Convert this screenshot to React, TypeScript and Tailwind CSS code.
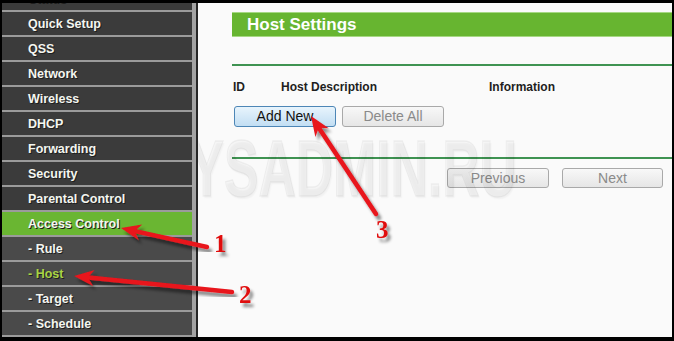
import React from "react";

type Item = { label: string; sub?: boolean; active?: boolean; current?: boolean };

const items: Item[] = [
  { label: "Status" },
  { label: "Quick Setup" },
  { label: "QSS" },
  { label: "Network" },
  { label: "Wireless" },
  { label: "DHCP" },
  { label: "Forwarding" },
  { label: "Security" },
  { label: "Parental Control" },
  { label: "Access Control", active: true },
  { label: "- Rule", sub: true },
  { label: "- Host", sub: true, current: true },
  { label: "- Target", sub: true },
  { label: "- Schedule", sub: true },
];

function Arrow({ x1, y1, x2, y2 }: { x1: number; y1: number; x2: number; y2: number }) {
  const dx = x2 - x1;
  const dy = y2 - y1;
  const len = Math.hypot(dx, dy);
  const ux = dx / len;
  const uy = dy / len;
  const nx = -uy;
  const ny = ux;
  const L = 20;
  const W = 8;
  const bx = x2 - ux * L;
  const by = y2 - uy * L;
  const pts = [
    [x2, y2],
    [bx + nx * W, by + ny * W],
    [bx + ux * 6, by + uy * 6],
    [bx - nx * W, by - ny * W],
  ]
    .map((p) => p.join(","))
    .join(" ");
  return (
    <g filter="url(#shadow)">
      <line x1={x1} y1={y1} x2={bx + ux * 8} y2={by + uy * 8} stroke="#e8141c" strokeWidth={4.5} strokeLinecap="round" />
      <polygon points={pts} fill="#e8141c" />
    </g>
  );
}

function Btn({ label, w, primary }: { label: string; w: string; primary?: boolean }) {
  return (
    <div
      className={
        primary
          ? `${w} h-full rounded-[3px] border border-[#4d86b6] bg-gradient-to-b from-[#e8f4fc] to-[#c2def3] flex items-center justify-center text-[14px] text-[#111]`
          : `${w} h-full rounded-[3px] border border-[#a9a9a9] bg-gradient-to-b from-[#f8f8f8] to-[#e6e6e6] flex items-center justify-center text-[14px] text-[#8a8a8a]`
      }
    >
      {label}
    </div>
  );
}

export default function App() {
  return (
    <div className="relative w-[674px] h-[341px] overflow-hidden bg-black pt-[3px] pl-[2px] pr-[2px] pb-[4px] font-['Liberation_Sans',Arial,sans-serif]">
      <div className="flex h-full">
        <div className="w-[190px] h-full overflow-hidden bg-[#3b3b3b]">
          <div className="-mt-[16px]">
            {items.map((it) => (
              <div
                key={it.label}
                className={
                  "h-[25px] border-b-2 border-[#9b9b9b] flex items-center pl-[26px] pt-[2px] text-[12.5px] font-bold [text-shadow:1px_1px_0_#1e1e1e] " +
                  (it.active ? "bg-[#6ab632] " : it.sub ? "bg-[#4a4a4a] " : "bg-[#3b3b3b] ") +
                  (it.current ? "text-[#a9d445]" : "text-[#f4f6f0]")
                }
              >
                {it.label}
              </div>
            ))}
          </div>
        </div>
        <div className="w-[4px] h-full bg-[#a3a3a3]" />
        <div className="w-[2px] h-full bg-[#262626]" />
        <div className="relative flex-1 h-full bg-[#fafafa] overflow-hidden pt-[9px] pl-[34px]">
          <div className="h-[25px] border-t border-b border-[#a6d883] bg-[#67b530] flex items-center pl-[15px] text-[17px] font-bold text-white">
            Host Settings
          </div>
          <div className="mt-[27px] h-[2px] bg-[#3f9352]" />
          <div className="mt-[14px] h-[14px] flex items-center text-[12px] font-bold text-[#1e1e1e]">
            <div className="w-[49px] pl-[1px]">ID</div>
            <div className="w-[208px]">Host Description</div>
            <div>Information</div>
          </div>
          <div className="mt-[12px] h-[21px] flex gap-[6px] pl-[2px]">
            <Btn label="Add New" w="w-[102px]" primary />
            <Btn label="Delete All" w="w-[102px]" />
          </div>
          <div className="mt-[30px] h-[2px] bg-[#3f9352]" />
          <div className="mt-[9px] h-[20px] flex justify-end gap-[13px] pr-[9px]">
            <Btn label="Previous" w="w-[102px]" />
            <Btn label="Next" w="w-[101px]" />
          </div>
          <span className="pointer-events-none absolute left-[-43px] top-[126px] origin-left scale-x-[0.646] whitespace-nowrap text-[80px] leading-none font-bold text-[rgba(0,0,0,0.02)] [-webkit-text-stroke:1.5px_rgba(0,0,0,0.05)] [text-shadow:2px_2px_2px_rgba(0,0,0,0.04)]">
            SYSADMIN.RU
          </span>
        </div>
      </div>
      <svg className="pointer-events-none absolute left-0 top-0" width={674} height={341}>
        <defs>
          <filter id="shadow" x="-20%" y="-20%" width="140%" height="140%">
            <feDropShadow dx={3} dy={4} stdDeviation={1.8} floodColor="#000" floodOpacity={0.45} />
          </filter>
        </defs>
        <Arrow x1={207} y1={247} x2={121} y2={228} />
        <Arrow x1={232} y1={292} x2={74} y2={276} />
        <Arrow x1={376} y1={214} x2={311} y2={116} />
        <g filter="url(#shadow)" fill="#e01010" fontFamily="'Liberation Serif', 'Times New Roman', serif" fontWeight="bold" fontSize={25}>
          <text x={214} y={252}>1</text>
          <text x={239} y={303}>2</text>
          <text x={376} y={238}>3</text>
        </g>
      </svg>
    </div>
  );
}
